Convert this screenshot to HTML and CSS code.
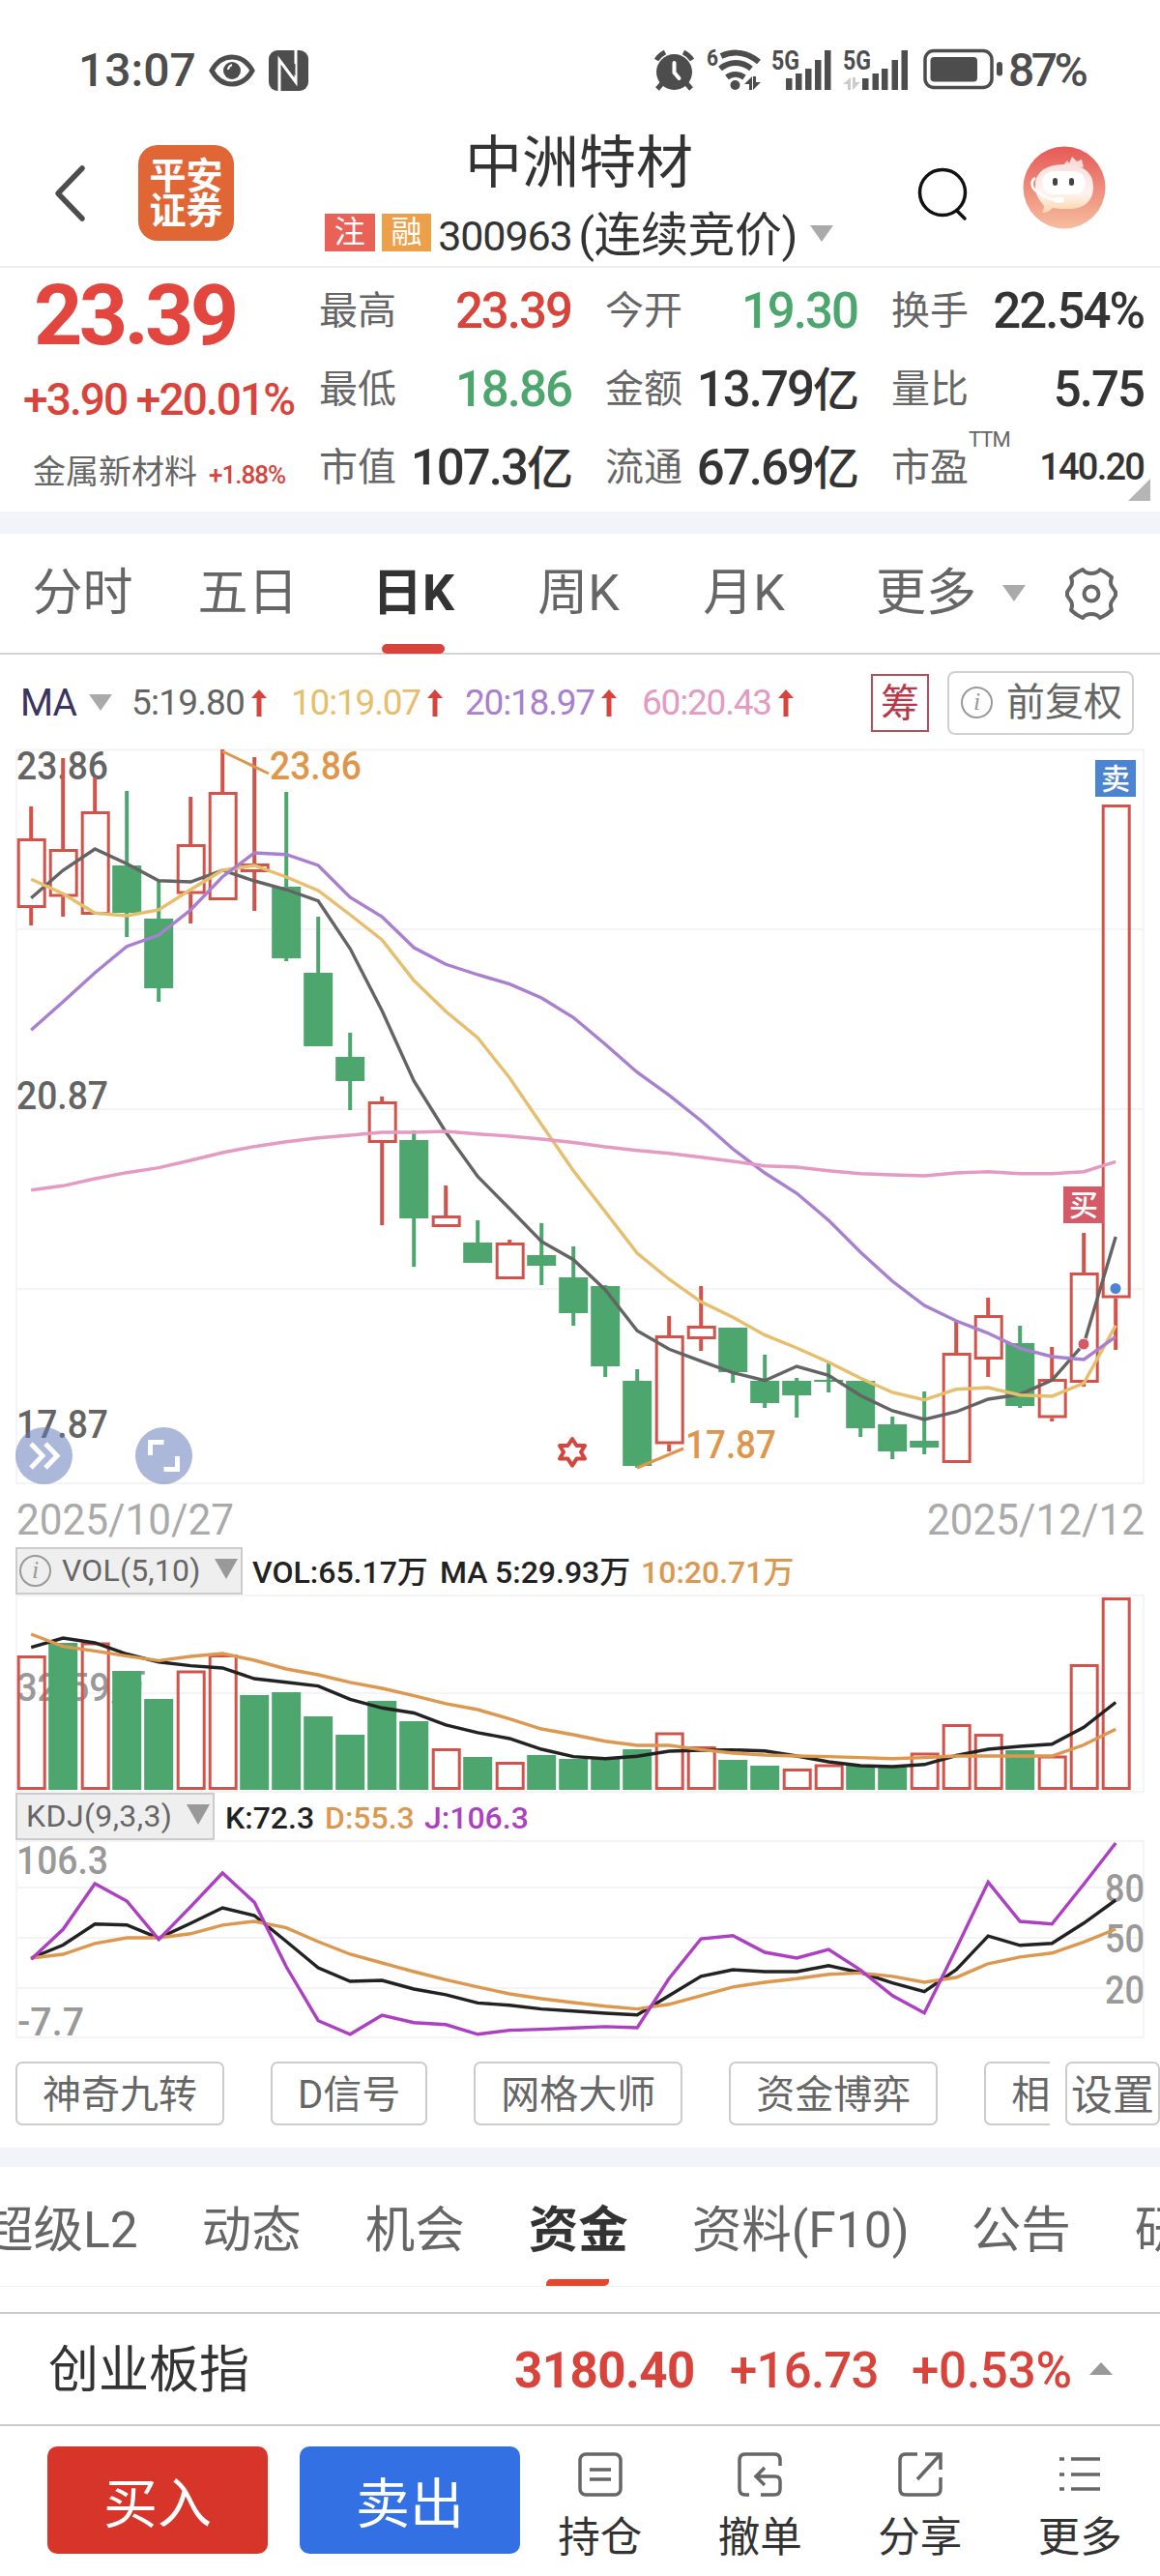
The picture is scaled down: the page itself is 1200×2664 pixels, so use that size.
FILE: index.html
```html
<!DOCTYPE html>
<html lang="zh-CN">
<head>
  <meta charset="UTF-8">
  <meta name="viewport" content="width=device-width, initial-scale=1.0">
  <title>中洲特材 300963</title>
  <link rel="stylesheet" href="styles.css">
</head>
<body>
  <!-- 状态栏 -->
  <div class="status">
    <span class="status-time">13:07</span>
    <svg class="icon-eye" width="48" height="34" viewBox="0 0 48 34" fill="none" stroke="#4d4d4d" stroke-width="5">
      <path d="M3 17C8 8 15 3 24 3s16 5 21 14c-5 9-12 14-21 14S8 26 3 17z"/>
      <circle cx="24" cy="17" r="9" fill="#4d4d4d" stroke="none"/>
      <path d="M24 11a6 6 0 0 0-4 5" stroke="#fff" stroke-width="2"/>
    </svg>
    <svg class="icon-nfc" width="41" height="42" viewBox="0 0 41 42">
      <rect width="41" height="42" rx="9" fill="#4d4d4d"/>
      <path d="M11 42V10l17 23V0" fill="none" stroke="#fff" stroke-width="3"/>
      <path d="M15 7l11 15v-8" fill="none" stroke="#4d4d4d" stroke-width="3"/>
    </svg>
    <svg class="icon-signal" width="362" height="56" viewBox="678 45 362 56" fill="#4d4d4d">
      <circle cx="698.5" cy="74.500" r="18.500"/>
      <path d="M680 62a22 22 0 0 1 9-8M717 62a22 22 0 0 0-9-8M687 85l-6 7M710 85l6 7" fill="none" stroke="#4d4d4d" stroke-width="5"/>
      <path d="M698.500 65v10l5 6" fill="none" stroke="#fff" stroke-width="4" stroke-linecap="round"/>
      <text x="732" y="68" font-size="24" font-weight="700" textLength="12" lengthAdjust="spacingAndGlyphs">6</text>
      <g fill="none" stroke="#4d4d4d" stroke-width="6">
        <path d="M747 58c13-6 27-4 39 6"/>
        <path d="M746 71c10-8 22-8 32 0"/>
        <path d="M753 80c5-4 12-4 18 0"/>
      </g>
      <circle cx="761.500" cy="88" r="5"/>
      <path d="M771 87l8-8v14h-3v-6zM788 85l-8 8V79h3v6z"/>
      <text x="799" y="72" font-size="27" font-weight="700" textLength="29" lengthAdjust="spacingAndGlyphs">5G</text>
      <path d="M814 81h6.500v12H814zM824 76h6.500v17H824zM834 71h6.500v22H834zM844 62h6.500v31H844zM854 52h6.500v41H854z"/>
      <text x="873" y="72" font-size="27" font-weight="700" textLength="29" lengthAdjust="spacingAndGlyphs">5G</text>
      <path d="M873 87l8-7v13h-3v-6zM891 85l-8 8V80h3v5z" fill="#ccc"/>
      <path d="M893 81h6.500v12H893zM903.500 76h6.500v17h-6.500zM913 71h6.500v22H913zM923.500 62h6.500v31h-6.500zM933.500 52h6.500v41h-6.500z"/>
      <rect x="958" y="52.500" width="69" height="38" rx="9" fill="none" stroke="#4d4d4d" stroke-width="3.500"/>
      <rect x="963.500" y="59" width="48.500" height="25.500" rx="4"/>
      <rect x="1032" y="64" width="6" height="14.500" rx="3"/>
    </svg>
    <span class="status-battery">87%</span>
  </div>

  <!-- 标题 -->
  <header class="header">
    <div class="header-left">
      <svg class="back" width="33" height="60" viewBox="0 0 33 60" fill="none" stroke="#4d4d4d" stroke-width="5.500" stroke-linecap="round" stroke-linejoin="round">
        <path d="M29 4L4 30l25 26"/>
      </svg>
      <div class="logo">平安<br>证券</div>
    </div>
    <div class="header-center">
      <h1>中洲特材</h1>
      <div class="code-line">
        <i class="tag tag-red">注</i>
        <i class="tag tag-orange">融</i>
        <span class="code">300963</span>
        <span class="state">(连续竞价)</span>
        <b class="caret"></b>
      </div>
    </div>
    <div class="header-right">
      <svg width="52" height="56" viewBox="0 0 52 56" fill="none" stroke="#111" stroke-width="3.500" stroke-linecap="round">
        <circle cx="26" cy="27" r="23.500"/>
        <path d="M41 46l8 8"/>
      </svg>
      <svg class="avatar" width="86" height="86" viewBox="0 0 86 86">
        <defs>
          <linearGradient id="avatarBg" x1="0" y1="0" x2="0" y2="1">
            <stop offset="0" stop-color="#e65a57"/>
            <stop offset="1" stop-color="#f6bd9f"/>
          </linearGradient>
          <linearGradient id="avatarFace" x1="0" y1="0" x2="0" y2="1">
            <stop offset="0" stop-color="#fbe0de"/>
            <stop offset=".6" stop-color="#fff3ee"/>
            <stop offset="1" stop-color="#fbd5a8"/>
          </linearGradient>
        </defs>
        <circle cx="43" cy="43" r="42.500" fill="url(#avatarBg)"/>
        <path d="M42 20l4-5 2 3 3-7 5 5 5-2 2 8z" fill="#fbdcd8"/>
        <path d="M22 62c-6-7-10-14-9-24 2-14 15-19 31-19 18 0 29 8 29 23s-9 23-26 23c-6 0-11 0-16-1-3 3-6 5-11 5 1-2 2-4 2-7z" fill="url(#avatarFace)"/>
        <rect x="20" y="26" width="45" height="24" rx="12" fill="#fff"/>
        <rect x="31" y="33" width="5" height="8" rx="2.500" fill="#444"/>
        <rect x="48" y="33" width="5" height="8" rx="2.500" fill="#444"/>
        <path d="M13 33c-5 3-4 9-1 12 6 6 13 9 22 11" fill="none" stroke="#fff" stroke-width="2.500"/>
        <rect x="32" y="53" width="11" height="5.500" rx="2.500" fill="#fff"/>
      </svg>
    </div>
  </header>

  <!-- 报价 -->
  <section class="quote">
    <div class="quote-main">
      <div class="price">23.39</div>
      <div class="change">+3.90 +20.01%</div>
      <div class="industry">金属新材料<em>+1.88%</em></div>
    </div>
    <div class="quote-grid">
      <p>最高<b class="red">23.39</b></p>
      <p>今开<b class="green">19.30</b></p>
      <p>换手<b>22.54%</b></p>
      <p>最低<b class="green">18.86</b></p>
      <p>金额<b>13.79<i>亿</i></b></p>
      <p>量比<b>5.75</b></p>
      <p>市值<b>107.3<i>亿</i></b></p>
      <p>流通<b>67.69<i>亿</i></b></p>
      <p>市盈<sup>TTM</sup><b class="small">140.20</b></p>
    </div>
    <span class="corner"></span>
  </section>
  <div class="band"></div>

  <!-- 周期 -->
  <nav class="period">
    <a>分时</a>
    <a>五日</a>
    <a class="active">日K</a>
    <a>周K</a>
    <a>月K</a>
    <a class="more">更多</a>
    <b class="caret"></b>
    <svg class="gear" width="54" height="56" viewBox="0 0 54 56" fill="none" stroke="#666" stroke-width="4" stroke-linejoin="round">
      <path d="M18 3q3 4 9 4t9-4q7 3 12 8-2 6 0 9t4 6v4q-2 3-4 6t0 9q-5 5-12 8-3-4-9-4t-9 4q-7-3-12-8 2-6 0-9t-4-6v-4q2-3 4-6t0-9q5-5 12-8z"/>
      <circle cx="27" cy="28" r="7.500"/>
    </svg>
  </nav>

  <!-- 均线 -->
  <div class="ma">
    <span class="ma-name">MA</span><b class="caret"></b>
    <span class="ma-item ma5">5:19.80<svg width="16" height="28" viewBox="0 0 16 28"><path d="M8 0l8 9h-5.500v19h-5V9H0z" fill="#d8443c"/></svg></span>
    <span class="ma-item ma10">10:19.07<svg width="16" height="28" viewBox="0 0 16 28"><path d="M8 0l8 9h-5.500v19h-5V9H0z" fill="#d8443c"/></svg></span>
    <span class="ma-item ma20">20:18.97<svg width="16" height="28" viewBox="0 0 16 28"><path d="M8 0l8 9h-5.500v19h-5V9H0z" fill="#d8443c"/></svg></span>
    <span class="ma-item ma60">60:20.43<svg width="16" height="28" viewBox="0 0 16 28"><path d="M8 0l8 9h-5.500v19h-5V9H0z" fill="#d8443c"/></svg></span>
    <span class="chip">筹</span>
    <span class="adjust"><i class="info">i</i>前复权</span>
  </div>

  <svg id="kline" class="chart" width="1200" height="830" viewBox="0 770 1200 830"></svg>

  <div class="indicator">
    <span class="select select-vol"><i class="info">i</i><u>VOL(5,10)</u><b class="caret"></b></span>
    <span class="v1">VOL:65.17万</span>
    <span class="v2">MA</span>
    <span class="v3">5:29.93万</span>
    <span class="v4 orange">10:20.71万</span>
  </div>
  <svg id="vol" class="chart" width="1200" height="205" viewBox="0 1649 1200 205"></svg>

  <div class="indicator">
    <span class="select select-kdj"><u>KDJ(9,3,3)</u><b class="caret"></b></span>
    <span class="k1">K:72.3</span>
    <span class="k2 orange">D:55.3</span>
    <span class="k3 purple">J:106.3</span>
  </div>
  <svg id="kdj" class="chart" width="1200" height="207" viewBox="0 1903 1200 207"></svg>

  <!-- 工具 -->
  <div class="tools">
    <div class="tools-scroll">
      <span>神奇九转</span>
      <span>D信号</span>
      <span>网格大师</span>
      <span>资金博弈</span>
      <span class="cut">相</span>
    </div>
    <span class="tools-set">设置</span>
  </div>
  <div class="band band-thin"></div>

  <nav class="detail">
    <a>超级L2</a>
    <a>动态</a>
    <a>机会</a>
    <a class="active">资金</a>
    <a class="f10">资料(F10)</a>
    <a>公告</a>
    <a>研</a>
  </nav>

  <div class="index">
    <span class="index-name">创业板指</span>
    <b class="index-price">3180.40</b>
    <span class="index-diff">+16.73</span>
    <span class="index-rate">+0.53%</span>
    <b class="caret caret-up"></b>
  </div>

  <footer class="trade">
    <button class="buy">买入</button>
    <button class="sell">卖出</button>
    <div class="trade-item">
      <svg width="46" height="46" viewBox="0 0 46 46"><rect x="2" y="2" width="42" height="42" rx="6"/><path d="M12 18h22M12 28h22"/></svg>
      持仓
    </div>
    <div class="trade-item">
      <svg width="46" height="46" viewBox="0 0 46 46"><path d="M44 14V8q0-6-6-6H8Q2 2 2 8v30q0 6 6 6h4M24 44h14q6 0 6-6V30q0-5-5-5H20M28 16l-9 9 9 9"/></svg>
      撤单
    </div>
    <div class="trade-item">
      <svg width="46" height="46" viewBox="0 0 46 46"><path d="M20 2H8Q2 2 2 8v30q0 6 6 6h30q6 0 6-6V26M28 2h16v16M43 3L20 28"/></svg>
      分享
    </div>
    <div class="trade-item">
      <svg width="46" height="46" viewBox="0 0 46 46"><path d="M2 7h5M14 7h30M2 23h5M14 23h30M2 38h5M14 38h30"/></svg>
      更多
    </div>
  </footer>

  <script src="chart.js"></script>
</body>
</html>
```

FILE: styles.css
```css
* {
  box-sizing: border-box;
}

body {
  margin: 0;
  width: 1200px;
  background: #fff;
  color: #333;
  font-family: Roboto, "Noto Sans CJK SC", sans-serif;
  overflow-x: hidden;
}

i, em, u {
  font-style: normal;
  text-decoration: none;
}

svg {
  display: block;
  flex-shrink: 0;
  overflow: visible;
}

span, a, b {
  white-space: nowrap;
}

.red { color: #d8443c; }
.green { color: #4ca66e; }
.orange { color: #dd9850; }
.purple { color: #ad3fc3; }

.caret {
  display: inline-block;
  border: 12px solid transparent;
  border-top: 17px solid #aaa;
  border-bottom: 0;
}

.caret-up {
  border-top: 0;
  border-bottom: 13px solid #999;
}

.info {
  display: inline-block;
  width: 33px;
  height: 33px;
  border: 2px solid #999;
  border-radius: 50%;
  color: #999;
  font: italic 26px/28px "Liberation Serif", serif;
  text-align: center;
}

/* 状态栏 */
.status {
  display: flex;
  align-items: center;
  height: 124px;
  padding: 21px 0 0 81px;
  color: #4d4d4d;
  font-size: 48px;
  font-weight: 500;
}

.status-time {
  width: 135px;
}

.icon-nfc {
  margin-left: 14px;
}

.icon-signal {
  margin-left: 358px;
  margin-top: 1px;
}

.status-battery {
  margin-left: 4px;
  letter-spacing: -3.5px;
}

/* 标题 */
.header {
  display: flex;
  height: 153px;
  border-bottom: 2px solid #eee;
}

.header-left {
  display: flex;
  align-items: center;
  width: 336px;
  padding-left: 56px;
}

.logo {
  width: 99px;
  height: 99px;
  margin-left: 54px;
  padding-top: 14px;
  border-radius: 20px;
  background: #e06636;
  color: #fff;
  font-size: 38px;
  font-weight: 700;
  line-height: 36px;
  text-align: center;
}

.header-center {
  width: 526px;
}

h1 {
  margin: 0;
  font-size: 59px;
  font-weight: 400;
  line-height: 90px;
  text-align: center;
}

.code-line {
  display: flex;
  align-items: center;
  height: 60px;
  line-height: 60px;
}

.tag {
  width: 52px;
  height: 39px;
  margin: -7px 7px 0 0;
  background: #ea6158;
  color: #fff;
  font-size: 32px;
  line-height: 39px;
  text-align: center;
}

.tag-orange {
  background: #eca04a;
}

.code {
  width: 146px;
  font-size: 43px;
  letter-spacing: -1.1px;
}

.state {
  font-size: 49px;
  letter-spacing: -0.5px;
}

.code-line .caret {
  margin: -6px 0 0 13px;
}

.header-right {
  display: flex;
  align-items: center;
  padding-left: 87px;
}

.avatar {
  margin: -12px 0 0 57px;
}

/* 报价 */
.quote {
  display: flex;
  position: relative;
  height: 252px;
}

.quote-main {
  width: 330px;
  color: #d8443c;
}

.price {
  padding-left: 35px;
  font-size: 88px;
  font-weight: 700;
  letter-spacing: -3.8px;
  line-height: 98px;
  color: #e2463f;
}

.change {
  padding-left: 24px;
  font-size: 46px;
  font-weight: 500;
  letter-spacing: -1.9px;
  line-height: 76px;
  white-space: nowrap;
}

.industry {
  padding-left: 34px;
  color: #666;
  font-size: 34px;
  line-height: 74px;
}

.industry em {
  margin-left: 12px;
  color: #d8443c;
  font-size: 26px;
  font-weight: 500;
  letter-spacing: -1px;
}

.quote-grid {
  display: grid;
  grid-template-columns: repeat(3, 261px);
  grid-auto-rows: 81px;
  column-gap: 35px;
  padding-top: 4px;
}

.quote-grid p {
  display: flex;
  margin: 0;
  color: #666;
  font-size: 40px;
  line-height: 81px;
}

.quote-grid b {
  margin-left: auto;
  color: #333;
  font-size: 51px;
  font-weight: 500;
  letter-spacing: -2px;
}

.quote-grid b.red { color: #d8443c; }
.quote-grid b.green { color: #4ca66e; }

.quote-grid b i {
  font-size: 48px;
}

.quote-grid b.small {
  font-size: 38px;
  letter-spacing: -1.8px;
}

sup {
  font-size: 22px;
  line-height: 24px;
  letter-spacing: -1px;
}

.corner {
  position: absolute;
  right: 10px;
  bottom: 11px;
  border-left: 23px solid transparent;
  border-bottom: 23px solid #b5b5b5;
}

.band {
  height: 23px;
  background: #f3f4f9;
}

.band-thin {
  height: 20px;
}

/* 周期 */
.period {
  display: flex;
  align-items: center;
  height: 125px;
  border-bottom: 2px solid #d4d4d4;
}

.period a {
  position: relative;
  width: 171px;
  color: #666;
  font-size: 52px;
  line-height: 126px;
  text-align: center;
}

.period .active,
.detail .active {
  color: #333;
  font-weight: 700;
}

.period .active::after,
.detail .active::after {
  content: "";
  position: absolute;
  left: calc(50% - 33px);
  bottom: 1px;
  width: 65px;
  height: 10px;
  border-radius: 5px;
  background: #d8443c;
}

.period .more {
  width: auto;
  margin-left: 51px;
}

.period .caret {
  margin-left: 27px;
}

.gear {
  margin-left: 41px;
}

/* 均线 */
.ma {
  display: flex;
  align-items: center;
  height: 93px;
  padding: 6px 0 0 21px;
}

.ma-name {
  width: 71px;
  color: #3a3560;
  font-size: 39px;
  letter-spacing: -1px;
}

.ma-item {
  display: flex;
  align-items: center;
  font-size: 37px;
  letter-spacing: -0.8px;
}

.ma-item svg {
  margin-left: 7px;
}

.ma5 { width: 165px; margin-left: 20px; color: #646464; }
.ma10 { width: 180px; color: #e6be6c; }
.ma20 { width: 183px; color: #a97fcf; }
.ma60 { width: 237px; color: #e49ac2; }

.ma10, .ma20, .ma60 {
  letter-spacing: -1.2px;
}

.chip {
  width: 60px;
  height: 60px;
  border: 2px solid #b5505a;
  color: #b8384a;
  font-size: 40px;
  line-height: 57px;
  text-align: center;
}

.adjust {
  display: flex;
  align-items: center;
  width: 193px;
  height: 66px;
  margin-left: 19px;
  padding-left: 12px;
  border: 2px solid #d0d0d0;
  border-radius: 8px;
  color: #666;
  font-size: 40px;
  line-height: 62px;
}

.adjust .info {
  margin-right: 14px;
}

/* 指标 */
.indicator {
  display: flex;
  height: 49px;
  padding-left: 16px;
  color: #222;
  font-size: 32px;
  font-weight: 500;
  line-height: 53px;
}

.select {
  display: flex;
  align-items: center;
  height: 49px;
  border: 2px solid #ccc;
  background: #efefef;
  color: #666;
  font-weight: 400;
}

.select .caret {
  border-width: 21px 12px 0;
  border-top-color: #999;
  margin-left: auto;
  margin-right: 3px;
  margin-top: -4px;
}

.select-vol { width: 235px; padding-left: 2px; }
.select-vol u { margin-left: 11px; letter-spacing: 0.2px; }
.select-kdj { width: 206px; padding-left: 9px; }
.select-kdj u { letter-spacing: 0.4px; }

.v1 { width: 194px; margin-left: 10px; }
.v2 { width: 57px; }
.v3 { width: 151px; }
.k1 { width: 103px; margin-left: 11px; }
.k2 { width: 103px; }

/* 工具 */
.tools {
  display: flex;
  height: 111px;
  padding: 22px 0 0 16px;
  color: #666;
  font-size: 40px;
}

.tools span {
  flex-shrink: 0;
  height: 66px;
  padding: 0 26px;
  border: 2px solid #ccc;
  border-radius: 7px;
  line-height: 66px;
}

.tools-scroll {
  display: flex;
  gap: 48px;
  width: 1070px;
  overflow: hidden;
}

.tools .cut {
  width: 162px;
}

.tools .tools-set {
  width: 98px;
  margin-left: 16px;
  padding: 0 0 0 4px;
  font-size: 43px;
}

/* 资讯 */
.detail {
  display: flex;
  gap: 66px;
  height: 124px;
  margin-left: -17px;
  color: #666;
  font-size: 51.5px;
  overflow: hidden;
  box-shadow: inset 0 -1px #eee;
}

.detail a {
  position: relative;
  height: 124px;
  line-height: 132px;
}

.detail .f10 {
  width: 223px;
}

.detail .active::after {
  height: 7px;
  bottom: 1px;
  border-radius: 5px 0 5px 0;
  background: #e4472d;
}

/* 指数 */
.index {
  display: flex;
  align-items: center;
  height: 116px;
  margin-top: 26px;
  padding: 4px 0 0 50px;
  border-top: 2px solid #ccc;
  color: #d8443c;
  font-size: 51px;
  line-height: 108px;
}

.index-name {
  width: 482px;
  color: #333;
  font-size: 52px;
}

.index-price {
  width: 223px;
  letter-spacing: -0.5px;
}

.index-diff {
  width: 188px;
  font-weight: 500;
  letter-spacing: -0.8px;
}

.index-rate {
  width: 184px;
  font-weight: 500;
  letter-spacing: -0.2px;
}

.index .caret {
  margin-top: -5px;
}

/* 底部交易 */
.trade {
  display: flex;
  height: 157px;
  padding: 21px 0 0 49px;
  border-top: 2px solid #ccc;
}

.trade button {
  width: 228px;
  height: 111px;
  margin-right: 33px;
  padding: 0 0 2px;
  border: 0;
  border-radius: 10px;
  background: #d73529;
  color: #fff;
  font: 56px "Noto Sans CJK SC", sans-serif;
}

.trade .sell {
  margin-right: 0;
  background: #3270e3;
}

.trade-item {
  display: flex;
  flex-direction: column;
  align-items: center;
  width: 165.5px;
  padding-top: 6px;
  font-size: 43.5px;
  line-height: 86px;
}

.trade-item svg {
  fill: none;
  stroke: #666;
  stroke-width: 3.5;
}
```

FILE: chart.js
```js
// 颜色
const RED = '#d3524a'
const GREEN = '#4ca66e'
const GRID = '#f4f4f6'

// 第 i 根K线的中心
const cx = i => 32.2 + i * 33

const line = (x1, y1, x2, y2, color, w) =>
  `<line x1="${x1}" y1="${y1}" x2="${x2}" y2="${y2}" stroke="${color}" stroke-width="${w}"/>`

const poly = (ys, color) =>
  `<polyline points="${ys.map((y, i) => cx(i) + ',' + y).join(' ')}" fill="none" stroke="${color}" stroke-width="3.4"/>`

// w 为文字的总宽度
const label = (str, x, y, size, w, color, weight = 400) =>
  `<text x="${x}" y="${y}" font-size="${size}" font-weight="${weight}" fill="${color}" textLength="${w}" lengthAdjust="spacingAndGlyphs">${str}</text>`

const bar = (i, top, bottom, up) => up
  ? `<rect x="${cx(i) - 13}" y="${top + 1.5}" width="27" height="${Math.max(bottom - top - 3, 1)}" fill="none" stroke="${RED}" stroke-width="3"/>`
  : `<rect x="${cx(i) - 15}" y="${top}" width="30" height="${bottom - top}" fill="${GREEN}"/>`

const frame = (top, bottom, rows) => {
  let s = `<rect x="17" y="${top}" width="1166" height="${bottom - top}" fill="none" stroke="${GRID}" stroke-width="2"/>`
  rows.forEach(y => { s += line(17, y, 1183, y, GRID, 2) })
  return s
}

// K线：[涨跌, 最高, 实体上沿, 实体下沿, 最低]
const candles = [
  [1, 834, 867, 939, 957], [1, 784, 878, 927.5, 948], [1, 804, 839, 946, 946],
  [0, 818, 895, 944, 969], [0, 912, 950, 1022, 1036], [1, 824, 873, 924.5, 955],
  [1, 775, 819, 931, 931], [1, 783, 893, 902, 942], [0, 819, 917, 991, 994],
  [0, 948, 1006, 1082, 1082], [0, 1068, 1093, 1118, 1148], [1, 1134, 1139, 1182, 1267],
  [0, 1169, 1179, 1260, 1310], [1, 1226, 1257, 1269, 1269], [0, 1262, 1285, 1306, 1306],
  [1, 1282, 1285, 1323, 1323], [0, 1265, 1298, 1309, 1329], [0, 1289, 1321, 1358, 1371],
  [0, 1329, 1330, 1413, 1424], [0, 1416, 1428, 1516, 1518], [1, 1361, 1381, 1493.5, 1501],
  [1, 1330, 1371, 1385, 1397], [0, 1373, 1373, 1419, 1430], [0, 1401, 1428, 1451, 1456],
  [0, 1425, 1428, 1443, 1466], [0, 1410, 1427, 1429, 1440], [0, 1428, 1428, 1477, 1486],
  [0, 1465, 1473, 1501, 1509], [0, 1439, 1490, 1497, 1504], [1, 1367, 1399, 1513, 1513],
  [1, 1342, 1360, 1406, 1424], [0, 1371, 1389, 1454, 1456], [1, 1393, 1426, 1466.5, 1470],
  [1, 1275, 1316, 1430, 1434], [1, 832, 832, 1342.5, 1396]
]
const ma5 = [928.7, 900, 878, 893.3, 910.7, 912, 900, 911, 920, 931.7, 981, 1045.3, 1118, 1170.7, 1216.7, 1250, 1284, 1302.7, 1334, 1376.3, 1395.3, 1407.7, 1419.7, 1427.7, 1413, 1422.3, 1443.3, 1459, 1468, 1460, 1447, 1442, 1427.3, 1390, 1279]
const ma10 = [909.3, 924.3, 944.3, 947, 941, 920, 900, 895, 907, 921, 946, 972, 1014, 1046, 1073.3, 1114.7, 1163, 1210.7, 1253.3, 1296, 1323, 1346.3, 1362.3, 1380.7, 1394, 1408.7, 1425.3, 1440, 1447.7, 1436.7, 1435, 1442.7, 1444, 1430.3, 1370.7]
const ma20 = [1065.3, 1036, 1006, 978.7, 967, 941, 906.7, 882, 883.7, 895, 928, 948, 980, 997.3, 1008, 1017.7, 1032, 1052.3, 1080, 1109, 1132.7, 1159, 1188.3, 1213, 1234, 1262, 1295, 1325, 1350, 1366, 1378.7, 1394.3, 1403, 1406, 1382.3]
const ma60 = [1230.7, 1226.3, 1219, 1212.7, 1207.7, 1200, 1192, 1185.7, 1180.7, 1176.7, 1174, 1171, 1171, 1170, 1172.7, 1175, 1178, 1181.5, 1186, 1189.7, 1192.7, 1196.7, 1201, 1205.7, 1207, 1210.7, 1213.7, 1215, 1216, 1213, 1211.7, 1213.7, 1213.7, 1211.7, 1201.3]

let k = frame(775.5, 1534, [961, 1147, 1333])
k += label('23.86', 17, 806, 40, 95, '#646464', 500)
k += label('20.87', 17, 1147, 40, 95, '#646464', 500)
k += label('17.87', 17, 1487, 40, 95, '#646464', 500)
candles.forEach(([up, high, top, bottom, low], i) => {
  const color = up ? RED : GREEN
  if (high < top) k += line(cx(i), high, cx(i), top, color, 4)
  if (low > bottom) k += line(cx(i), bottom, cx(i), low, color, 4)
  k += bar(i, top, bottom, up)
})
k += poly(ma5, '#646464') + poly(ma10, '#e6be6c') + poly(ma20, '#a97fcf') + poly(ma60, '#e49ac2')
// 最高最低价
k += line(230, 777, 278, 800, '#e0964a', 3) + label('23.86', 279, 806, 40, 95, '#e0964a', 500)
k += line(659, 1518, 707, 1498, '#e0964a', 3) + label('17.87', 709, 1508, 40, 94, '#e0964a', 500)
// 买卖点
k += `<rect x="1133" y="786" width="42" height="38" fill="#4b84d0"/>` + label('卖', 1139, 816, 30, 30, '#fff', 500)
k += `<rect x="1100" y="1227" width="42" height="38" fill="#d55a68"/>` + label('买', 1106, 1257, 30, 30, '#fff', 500)
k += `<circle cx="1121" cy="1390" r="6" fill="#d55a68" stroke="#fff"/><circle cx="1154" cy="1332.5" r="5.500" fill="#4b84d0"/>`
// 左下角按钮
k += `<circle cx="45.500" cy="1505.500" r="29.500" fill="#6078ba" fill-opacity=".53"/>
  <path d="M32 1493l12 12.500-12 12.500M47 1493l12 12.500-12 12.500" fill="none" stroke="#fff" stroke-width="5"/>
  <circle cx="169.500" cy="1505.500" r="29.500" fill="#6078ba" fill-opacity=".53"/>
  <path d="M155.500 1505v-13.500h14M183.500 1506v13.500h-14" fill="none" stroke="#fff" stroke-width="5"/>
  <path d="M592 1488l4.500 7h8.500l-4 6.800 4 6.800h-8.500l-4.500 7-4.500-7h-8.500l4-6.800-4-6.800h8.500z" fill="none" stroke="#d3453e" stroke-width="4" stroke-linejoin="round"/>`
k += label('2025/10/27', 17, 1587, 45, 225, '#aaa') + label('2025/12/12', 959, 1587, 45, 225, '#aaa')
document.querySelector('#kline').innerHTML = k

// 成交量柱顶
const vols = [1712, 1699, 1698.5, 1728, 1757, 1727.5, 1711, 1753, 1750, 1775, 1794, 1759, 1780, 1808, 1817, 1822, 1815, 1819, 1819, 1809, 1791.5, 1806, 1820, 1826, 1829, 1824.5, 1826, 1827.5, 1812.5, 1783, 1793, 1810, 1815.5, 1721, 1652]
const volUp = [0, 2, 5, 6, 13, 15, 20, 21, 24, 25, 28, 29, 30, 32, 33, 34]
const vma5 = [1703.6, 1694, 1699, 1710.5, 1718.8, 1722.6, 1725, 1736, 1739.8, 1743.6, 1757.4, 1766.3, 1771.5, 1783.9, 1791.8, 1798, 1809, 1816.6, 1818.7, 1816.2, 1811, 1810, 1809.7, 1810.7, 1816, 1822, 1826, 1827, 1824.8, 1815.5, 1809, 1806, 1803.8, 1786.3, 1760.5]
const vma10 = [1690, 1702.6, 1707.4, 1712.6, 1717.4, 1713, 1710, 1717, 1726, 1732, 1739.8, 1746, 1753.6, 1761.8, 1768, 1777.7, 1788, 1794, 1800.7, 1805, 1805, 1809.4, 1813, 1815, 1816, 1816.6, 1817.6, 1818.7, 1817.6, 1816, 1816, 1816, 1816, 1804.5, 1788.3]

let v = frame(1650, 1853, [1751])
v += label('32.59万', 17, 1759, 40, 135, '#999', 500)
vols.forEach((top, i) => { v += bar(i, top, 1851, volUp.includes(i)) })
v += poly(vma5, '#222') + poly(vma10, '#dd9850')
document.querySelector('#vol').innerHTML = v

// KDJ
const kk = [2025, 2011.5, 1989.8, 1990.8, 2004.3, 1989, 1973, 1981, 2007.7, 2035, 2049, 2048, 2057, 2062.8, 2071.4, 2073.8, 2077.6, 2079.7, 2082, 2083.8, 2063.8, 2043.9, 2037, 2039, 2039, 2032.8, 2040, 2050.7, 2059.7, 2037, 2002.2, 2011.8, 2009.8, 1988.8, 1965]
const dd = [2025, 2021, 2009.8, 2004, 2004, 1999.8, 1990.8, 1987, 1993.6, 2008, 2021, 2030, 2039, 2047.3, 2054.9, 2062, 2067, 2071, 2074.8, 2077.6, 2072.8, 2063.8, 2054.9, 2050, 2046.3, 2041.8, 2040.4, 2043.9, 2050, 2045, 2030.8, 2023.9, 2019.8, 2008.4, 1995]
const jj = [2026.3, 1995.3, 1948, 1966, 2005.6, 1971.9, 1937, 1967.4, 2034, 2089.7, 2103.8, 2084, 2091.7, 2093.8, 2103.8, 2099.6, 2098.6, 2097.2, 2095.9, 2096.9, 2046, 2005, 2001.8, 2019, 2025, 2016, 2037.3, 2063.8, 2081.7, 2015.3, 1946.4, 1987, 1989.8, 1948.5, 1906]

let d = frame(1904, 2107, [1952, 2004, 2056])
d += label('106.3', 17, 1938, 41, 95, '#999', 500) + label('-7.7', 18, 2105, 41, 69, '#999', 500)
d += label('80', 1143, 1966.5, 41, 41, '#999', 500) + label('50', 1143, 2019, 41, 41, '#999', 500) + label('20', 1143, 2071.5, 41, 41, '#999', 500)
d += poly(kk, '#222') + poly(dd, '#dd9850') + poly(jj, '#ad3fc3')
document.querySelector('#kdj').innerHTML = d
```
